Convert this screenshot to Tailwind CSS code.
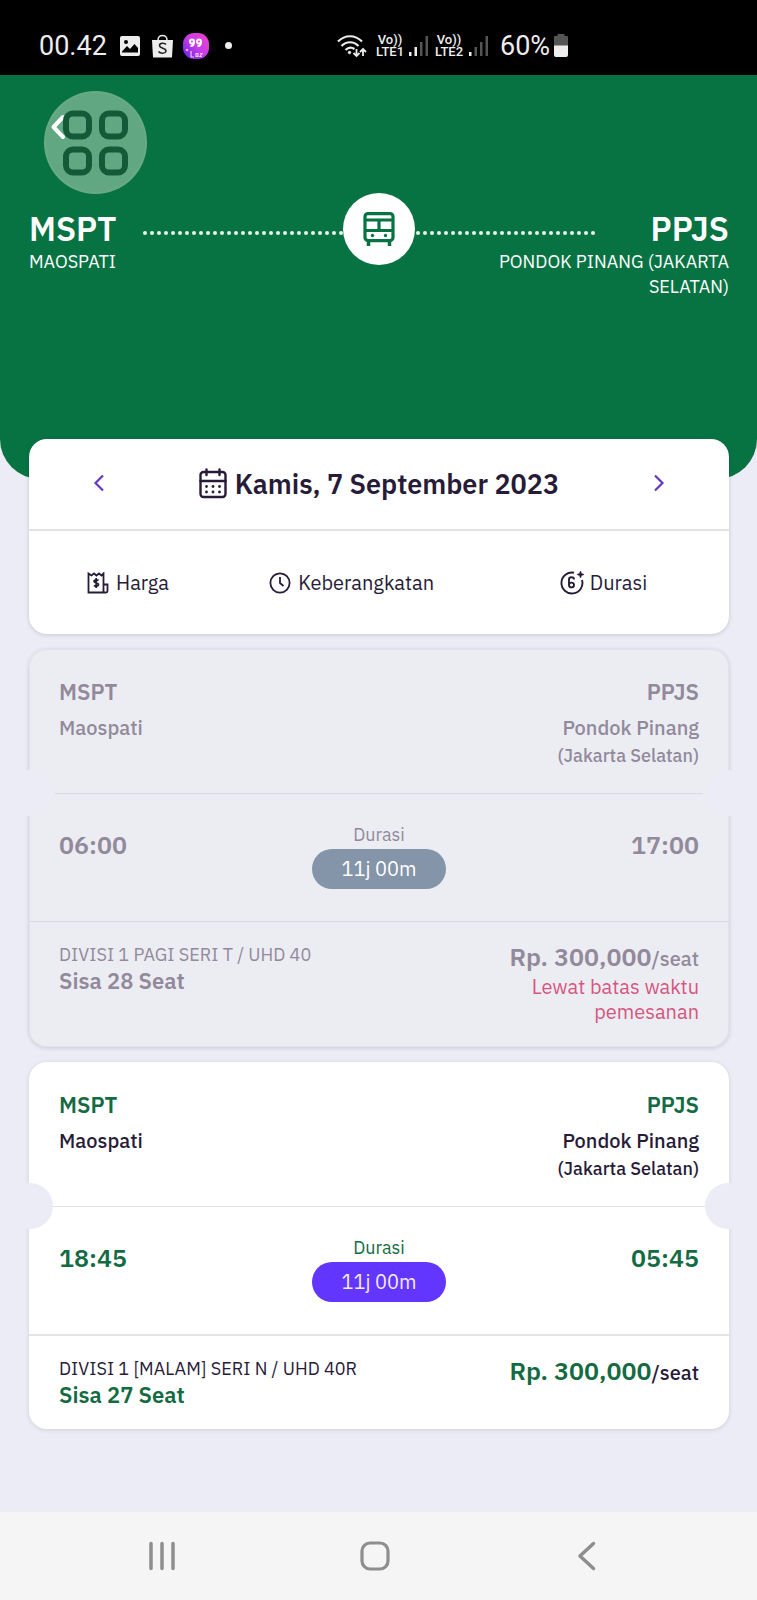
<!DOCTYPE html>
<html lang="id">
<head>
<meta charset="utf-8">
<meta name="viewport" content="width=device-width, initial-scale=1">
<title>Jadwal Bus</title>
<script src="https://cdn.jsdelivr.net/npm/@tailwindcss/browser@4"></script>
</head>
<body class="min-h-screen flex flex-col bg-[#ebecf5] text-[#281b38] font-['IBM_Plex_Sans','Roboto',sans-serif]">

<!-- Status bar -->
<div class="h-[75px] pt-4 pl-[39px] flex items-center bg-black text-[#ededed] font-['Roboto',sans-serif]">
  <span class="w-[81px] text-[27px] leading-8">00.42</span>
  <svg class="w-5 h-5" viewBox="0 0 20 20"><rect width="20" height="20" rx="2" fill="#ededed"/><circle cx="6" cy="6" r="2" fill="#000"/><path d="M2 15.500 7 10l3 3 4.500-5L18 12v4.500H2z" fill="#000"/></svg>
  <svg class="w-[22px] h-6 ml-3" viewBox="0 0 22 24"><path d="M6 6C6 0 15 0 15 6" fill="none" stroke="#ededed" stroke-width="1.500"/><path d="M0 6h21l-1 17.500H1z" fill="#ededed"/><path d="M14 10.500c-1-1.500-6.500-2-6.500 1 0 3.500 7 2 6.500 5.500-.5 3-6 2.500-7.500.5" fill="none" stroke="#222" stroke-width="1.500"/></svg>
  <svg class="w-[26px] h-[26px] ml-[9px]" viewBox="0 0 26 26"><defs><linearGradient id="lz" x1="1" y1="0" x2="0" y2="1"><stop offset="0" stop-color="#f540c8"/><stop offset=".5" stop-color="#c93de8"/><stop offset="1" stop-color="#5a20e8"/></linearGradient></defs><rect width="26" height="26" rx="11" fill="url(#lz)"/><g fill="none" stroke="#fff" stroke-width="2"><circle cx="9" cy="8.500" r="2"/><path d="M11 8.500c0 3-1 4.500-3.500 4.500"/><circle cx="16" cy="8.500" r="2"/><path d="M18 8.500c0 3-1 4.500-3.500 4.500"/></g><path d="M8 18v6h3M15 20.500h-2v3h2zm2 0h2l-2 3h2" fill="none" stroke="#f7c6f4" stroke-width="1.200"/><circle cx="4" cy="17" r="1.300" fill="#f7a6f4"/></svg>
  <span class="w-[7px] h-[7px] rounded-full bg-[#ededed] ml-4"></span>
  <svg class="w-[30px] h-6 ml-[105px]" viewBox="0 0 30 24" fill="none" stroke="#ededed" stroke-width="2.200"><path d="M1 7.500c7-7 17-7 24 0M4.500 12c5-5 12-5 17 0M8.500 16c3-3 6-3 9-1"/><circle cx="12.500" cy="18.500" r="1.200" fill="#ededed" stroke-width="1"/><path d="M19.500 15v7m-3-3 3 3 3-3M26 22v-7m-3 3 3-3 3 3" stroke-width="1.800"/></svg>
  <span class="w-[30px] ml-2 text-[13px] leading-3 font-medium text-center">Vo)) LTE1</span>
  <svg class="w-5 h-5 ml-1" viewBox="0 0 20 20"><path fill="#ededed" d="M0 16h2.500v4H0zM5.500 11H8v9H5.500z"/><path fill="#555" d="M11 6h2.500v14H11zM16.500 0H19v20h-2.500z"/></svg>
  <span class="w-[30px] ml-[5px] text-[13px] leading-3 font-medium text-center">Vo)) LTE2</span>
  <svg class="w-5 h-5 ml-[5px]" viewBox="0 0 20 20"><path fill="#ededed" d="M0 16h2.500v4H0z"/><path fill="#555" d="M5.500 11H8v9H5.500zM11 6h2.500v14H11zM16.500 0H19v20h-2.500z"/></svg>
  <span class="ml-[11px] text-[27px] leading-8">60%</span>
  <svg class="w-4 h-[23px] ml-[3px]" viewBox="0 0 16 23"><path d="M4.500 0h7v2H14a1 1 0 0 1 1 1v9H1V3a1 1 0 0 1 1-1h2.500z" fill="#555"/><path d="M1 11.500h14V21a2 2 0 0 1-2 2H3a2 2 0 0 1-2-2z" fill="#ededed"/></svg>
</div>

<!-- Route header -->
<header class="relative bg-[#077343] text-white rounded-b-[40px] pl-[29px] pr-7 pt-9 pb-[180px]">
  <button type="button" aria-label="Kembali" class="block w-10 h-8"></button>
  <button type="button" aria-label="Menu bantuan" class="absolute left-11 top-4 w-[103px] h-[103px] rounded-full bg-[#9fc9ad]/60 border-2 border-[#6eae89]/60">
    <svg class="w-full h-full" viewBox="0 0 99 99" fill="none" stroke="#135a38" stroke-width="6"><path d="M17 24 7.500 34l9.500 10" stroke="#fff" stroke-width="4" stroke-linecap="round" stroke-linejoin="round"/><rect x="20" y="20.500" width="23" height="23" rx="7"/><rect x="56" y="20.500" width="23" height="23" rx="7"/><rect x="20" y="56.500" width="23" height="23" rx="7"/><rect x="56" y="56.500" width="23" height="23" rx="7"/></svg>
  </button>
  <div class="relative mt-[66px] h-10 flex items-center">
    <span class="text-[33px] leading-10 font-semibold">MSPT</span>
    <svg class="flex-1 min-w-0 h-2 ml-[26px] mr-[50px] mt-2" aria-hidden="true"><line x1="3" y1="4" x2="99%" y2="4" stroke="#e8f5ee" stroke-width="4" stroke-linecap="round" stroke-dasharray="0 7"/></svg>
    <span class="text-[33px] leading-10 font-semibold">PPJS</span>
    <span class="absolute left-1/2 top-1/2 -translate-x-1/2 -translate-y-1/2 w-[72px] h-[72px] rounded-full bg-white flex items-center justify-center">
      <svg class="w-8 h-[34px]" viewBox="0 0 32 34" fill="none" stroke="#077343" stroke-width="3.200"><rect x="2" y="1.600" width="28" height="27" rx="3"/><path d="M2 8h28M2 18.500h28M16 8v10"/><path d="M5.500 29v5M26.500 29v5" stroke-width="3.500"/><circle cx="9.500" cy="23.500" r="1.700" fill="#077343" stroke="none"/><circle cx="22.500" cy="23.500" r="1.700" fill="#077343" stroke="none"/></svg>
    </span>
  </div>
  <div class="flex justify-between text-lg leading-[25px]">
    <span>MAOSPATI</span>
    <span class="w-60 text-right">PONDOK PINANG (JAKARTA SELATAN)</span>
  </div>
</header>

<main class="relative flex-1 -mt-10 pl-[29px] pr-7 flex flex-col gap-[15px]">

  <!-- Date and sorting -->
  <section class="bg-white rounded-[18px] shadow-[0_1px_4px_rgba(40,40,60,0.18)]">
    <div class="h-[90px] flex items-center justify-between px-[58px]">
      <button type="button" aria-label="Hari sebelumnya" class="w-6 h-8 flex items-center justify-center"><svg class="w-3 h-5" viewBox="0 0 12 20" fill="none" stroke="#6438c8" stroke-width="2.200"><path d="M10 1.500 2.500 9 10 16.500"/></svg></button>
      <h1 class="flex items-center gap-2 text-[27px] leading-8 font-semibold">
        <svg class="w-7 h-8" viewBox="0 0 28 32" fill="none" stroke="#281b38" stroke-width="2.400" stroke-linecap="round"><rect x="1.500" y="4" width="25" height="25" rx="3"/><path d="M1.500 13h25M7.500 1.500V7M20.500 1.500V7"/><path d="M7.500 18.500h.01M14 18.500h.01M20.500 18.500h.01M7.500 24h.01M14 24h.01M20.500 24h.01" stroke-width="2.800"/></svg>
        Kamis, 7 September 2023
      </h1>
      <button type="button" aria-label="Hari berikutnya" class="w-6 h-8 flex items-center justify-center"><svg class="w-3 h-5" viewBox="0 0 12 20" fill="none" stroke="#6438c8" stroke-width="2.200"><path d="M2 1.500 9.500 9 2 16.500"/></svg></button>
    </div>
    <div class="h-[105px] border-t-2 border-[#e1e3e4] pl-[58px] grid grid-cols-[182fr_290fr_169fr] items-center text-xl leading-7">
      <button type="button" class="flex items-center gap-[7px]"><svg class="w-[22px] h-[22px]" viewBox="0 0 22 22" fill="none" stroke="#281b38" stroke-width="1.800"><path d="M1.500 20.500v-19l3 2 2.500-2 2.500 2 2.500-2 2.500 2 2-2v19zM16.500 12.500h4v6.500q0 1.500-1.500 1.500h-3"/><path d="M11.500 8.500c-1-1-4.500-1-4.500.8 0 2 4.500 1 4.500 3.200 0 1.800-3.500 2-4.500.8M9.200 6v10"/></svg>Harga</button>
      <button type="button" class="flex items-center gap-[7px]"><svg class="w-[22px] h-[22px]" viewBox="0 0 22 22" fill="none" stroke="#281b38" stroke-width="1.800"><circle cx="11" cy="11" r="9.600"/><path d="M11 5v6l3.500 3"/></svg>Keberangkatan</button>
      <button type="button" class="flex items-center gap-1.5"><svg class="w-6 h-6" viewBox="0 0 24 24" fill="none" stroke="#281b38" stroke-width="1.900"><path d="M14 1.700A10.500 10.500 0 1 0 22 9"/><path d="M14 8.500c0-3-5-3-5 0v5.500c0 3.200 5 3.200 5 0s-5-3-5 0"/><path d="m20.500 0 1 2.500L24 3.500l-2.500 1-1 2.500-1-2.500-2.500-1 2.500-1z" fill="#281b38" stroke-width=".6"/></svg>Durasi</button>
    </div>
  </section>

  <!-- Closed departure -->
  <article class="relative bg-[#ecedf3] rounded-[18px] shadow-[inset_0_0_0_1px_#e2e2eb,0_1px_4px_rgba(40,40,80,0.18)] text-[#92899b]">
    <span class="absolute -left-[22px] top-[121px] w-[46px] h-[46px] rounded-full bg-[#ebecf5]"></span>
    <span class="absolute -right-[22px] top-[121px] w-[46px] h-[46px] rounded-full bg-[#ebecf5]"></span>
    <div class="px-[30px] pt-7 pb-[23px] flex justify-between">
      <div>
        <h2 class="text-[22px] leading-[30px] font-semibold">MSPT</h2>
        <p class="mt-[7px] text-xl leading-7 font-medium">Maospati</p>
      </div>
      <div class="text-right font-medium">
        <h2 class="text-[22px] leading-[30px] font-semibold">PPJS</h2>
        <p class="mt-[7px] text-xl leading-7">Pondok Pinang</p>
        <p class="text-lg leading-7">(Jakarta Selatan)</p>
      </div>
    </div>
    <div class="mx-[26px] border-t border-[#dadbe2]"></div>
    <div class="px-[30px] pt-[27px] pb-8 grid grid-cols-3">
      <time class="mt-[6px] text-[25px] leading-9 font-semibold">06:00</time>
      <div class="flex flex-col items-center">
        <span class="text-lg leading-7">Durasi</span>
        <span class="w-[134px] h-10 rounded-full bg-[#8494a9] text-white text-xl leading-10 text-center">11j 00m</span>
      </div>
      <time class="mt-[6px] text-[25px] leading-9 font-semibold text-right">17:00</time>
    </div>
    <div class="border-t border-[#dadbe2] px-[30px] pt-5 pb-[23px] flex justify-between">
      <div>
        <p class="text-lg leading-[26px]">DIVISI 1 PAGI SERI T / UHD 40</p>
        <p class="text-[22px] leading-[25px] font-semibold">Sisa 28 Seat</p>
      </div>
      <div class="w-52 text-right">
        <p class="text-xl leading-[30px] font-medium whitespace-nowrap"><strong class="text-[25px] font-semibold">Rp. 300,000</strong>/seat</p>
        <p class="text-xl leading-[25px] text-[#d4577f]">Lewat batas waktu pemesanan</p>
      </div>
    </div>
  </article>

  <!-- Available departure -->
  <article class="relative bg-white rounded-[18px] shadow-[0_1px_4px_rgba(40,40,60,0.15)]">
    <span class="absolute -left-[22px] top-[121px] w-[46px] h-[46px] rounded-full bg-[#ebecf5]"></span>
    <span class="absolute -right-[22px] top-[121px] w-[46px] h-[46px] rounded-full bg-[#ebecf5]"></span>
    <div class="px-[30px] pt-7 pb-[23px] flex justify-between">
      <div>
        <h2 class="text-[22px] leading-[30px] font-semibold text-[#146b43]">MSPT</h2>
        <p class="mt-[7px] text-xl leading-7 font-medium">Maospati</p>
      </div>
      <div class="text-right font-medium">
        <h2 class="text-[22px] leading-[30px] font-semibold text-[#146b43]">PPJS</h2>
        <p class="mt-[7px] text-xl leading-7">Pondok Pinang</p>
        <p class="text-lg leading-7">(Jakarta Selatan)</p>
      </div>
    </div>
    <div class="mx-6 border-t border-[#dfe1e2]"></div>
    <div class="px-[30px] pt-[27px] pb-8 grid grid-cols-3 text-[#146b43]">
      <time class="mt-[6px] text-[25px] leading-9 font-semibold">18:45</time>
      <div class="flex flex-col items-center">
        <span class="text-lg leading-7">Durasi</span>
        <span class="w-[134px] h-10 rounded-full bg-[#6236ff] text-[#f3eaff] text-xl leading-10 text-center">11j 00m</span>
      </div>
      <time class="mt-[6px] text-[25px] leading-9 font-semibold text-right">05:45</time>
    </div>
    <div class="border-t-2 border-[#e1e3e4] px-[30px] pt-5 pb-[22px] flex justify-between">
      <div>
        <p class="text-lg leading-[26px]">DIVISI 1 [MALAM] SERI N / UHD 40R</p>
        <p class="text-[22px] leading-[25px] font-semibold text-[#146b43]">Sisa 27 Seat</p>
      </div>
      <div class="w-52 text-right">
        <p class="text-xl leading-[30px] font-medium whitespace-nowrap"><strong class="text-[25px] font-semibold text-[#146b43]">Rp. 300,000</strong>/seat</p>
      </div>
    </div>
  </article>
</main>

<!-- System navigation -->
<nav aria-label="Navigasi sistem" class="h-[88px] bg-[#f5f5f5] pl-[138px] pr-[146px] flex items-center justify-between">
  <button type="button" aria-label="Aplikasi terbaru" class="w-12 h-12 flex items-center justify-center"><svg class="w-7 h-[30px]" viewBox="0 0 28 30" stroke="#8e8e8e" stroke-width="3.500" stroke-linecap="round"><path d="M3 2.500v25M14 2.500v25M25 2.500v25"/></svg></button>
  <button type="button" aria-label="Beranda" class="w-12 h-12 flex items-center justify-center"><svg class="w-[30px] h-[30px]" viewBox="0 0 30 30" fill="none" stroke="#8e8e8e" stroke-width="3.200"><rect x="2" y="2" width="26" height="26" rx="8"/></svg></button>
  <button type="button" aria-label="Kembali" class="w-12 h-12 flex items-center justify-center"><svg class="w-5 h-[30px]" viewBox="0 0 20 30" fill="none" stroke="#8e8e8e" stroke-width="3.500" stroke-linecap="round" stroke-linejoin="round"><path d="M16.500 2.500 3 15l13.500 12.500"/></svg></button>
</nav>
</body>
</html>
